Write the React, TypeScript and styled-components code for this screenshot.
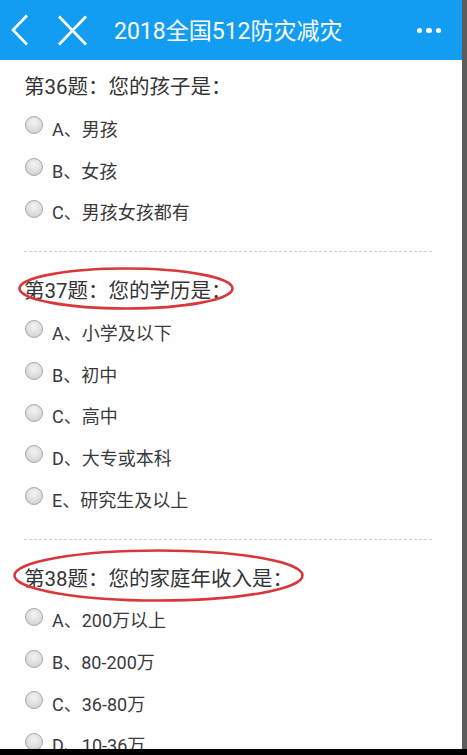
import { createGlobalStyle, styled } from 'styled-components';

const GlobalStyle = createGlobalStyle`
	html, body {
		margin: 0;
		padding: 0;
		background: #000;
	}
	body {
		font-family: Roboto, 'Noto Sans CJK SC', sans-serif;
	}
`;

interface Question {
	no: number;
	title: string;
	options: string[];
	mark?: { left: number; top: number; width: number; height: number };
}

const questions: Question[] = [
	{
		no: 36,
		title: '您的孩子是：',
		options: ['A、男孩', 'B、女孩', 'C、男孩女孩都有'],
	},
	{
		no: 37,
		title: '您的学历是：',
		options: ['A、小学及以下', 'B、初中', 'C、高中', 'D、大专或本科', 'E、研究生及以上'],
		mark: { left: -6, top: -4, width: 216, height: 43 },
	},
	{
		no: 38,
		title: '您的家庭年收入是：',
		options: ['A、200万以上', 'B、80-200万', 'C、36-80万', 'D、10-36万'],
		mark: { left: -11, top: -10, width: 291, height: 53 },
	},
];

const Screen = styled.div`
	display: flex;
	height: 749px;
	overflow: hidden;
`;

const Main = styled.div`
	width: 462px;
	background: #fff;
	display: flex;
	flex-direction: column;
	overflow: hidden;
`;

const Edge = styled.div`
	flex: 1;
	background: #5c5c5c;
`;

const TopBar = styled.header`
	height: 60px;
	flex-shrink: 0;
	background: #139df2;
	display: flex;
	align-items: center;
	color: #fff;
`;

const IconButton = styled.div<{ $ml: number }>`
	margin-left: ${(p) => p.$ml}px;
	display: flex;
	align-items: center;
`;

const BarTitle = styled.h1`
	margin: 0 0 2px 26px;
	font-size: 23px;
	font-weight: 400;
	flex: 1;
`;

const More = styled.div`
	display: flex;
	gap: 4px;
	margin-right: 21px;
	margin-top: 1px;

	span {
		width: 5.5px;
		height: 5.5px;
		border-radius: 50%;
		background: #fff;
	}
`;

const Body = styled.div`
	padding: 7px 30px 0 24px;
`;

const Section = styled.section`
	padding: 0 0 19px;
	border-bottom: 1px dashed #d0d0d0;

	& + & {
		padding-top: 19px;
	}
`;

const Title = styled.div`
	position: relative;
	display: inline-block;
	height: 40px;
	line-height: 40px;
	font-size: 20.5px;
	color: #333;
`;

const Mark = styled.svg`
	position: absolute;
	pointer-events: none;
	overflow: visible;
`;

const Option = styled.label`
	height: 41.7px;
	display: flex;
	align-items: center;
	font-size: 18px;
	color: #3a3a3a;
`;

const Radio = styled.span`
	width: 16px;
	height: 16px;
	border-radius: 50%;
	border: 1px solid #a8a8a8;
	background: radial-gradient(circle at 50% 35%, #f4f4f4 0%, #dcdcdc 60%, #c8c8c8 100%);
	margin: 0 9px 5px 1px;
	flex-shrink: 0;
`;

const App = () => (
	<>
		<GlobalStyle />
		<Screen>
			<Main>
				<TopBar>
					<IconButton $ml={10}>
						<svg width='20' height='32' viewBox='0 0 20 32'>
							<path d='M17 1.5 L3 16 L17 30.5' fill='none' stroke='#fff' strokeWidth='2.6' />
						</svg>
					</IconButton>
					<IconButton $ml={27}>
						<svg width='31' height='31' viewBox='0 0 31 31'>
							<path d='M2 1.5 L29 29.5 M29 1.5 L2 29.5' fill='none' stroke='#fff' strokeWidth='2.6' />
						</svg>
					</IconButton>
					<BarTitle>2018全国512防灾减灾</BarTitle>
					<More>
						<span />
						<span />
						<span />
					</More>
				</TopBar>
				<Body>
					{questions.map((q) => (
						<Section key={q.no}>
							<Title>
								第{q.no}题：{q.title}
								{q.mark && (
									<Mark
										style={{
											left: q.mark.left,
											top: q.mark.top,
											width: q.mark.width,
											height: q.mark.height,
										}}
										viewBox={`0 0 ${q.mark.width} ${q.mark.height}`}
									>
										<ellipse
											cx={q.mark.width / 2}
											cy={q.mark.height / 2}
											rx={q.mark.width / 2 - 1.5}
											ry={q.mark.height / 2 - 1.5}
											fill='none'
											stroke='#d8383c'
											strokeWidth='2.6'
										/>
									</Mark>
								)}
							</Title>
							{q.options.map((o) => (
								<Option key={o}>
									<Radio />
									{o}
								</Option>
							))}
						</Section>
					))}
				</Body>
			</Main>
			<Edge />
		</Screen>
	</>
);

export default App;
